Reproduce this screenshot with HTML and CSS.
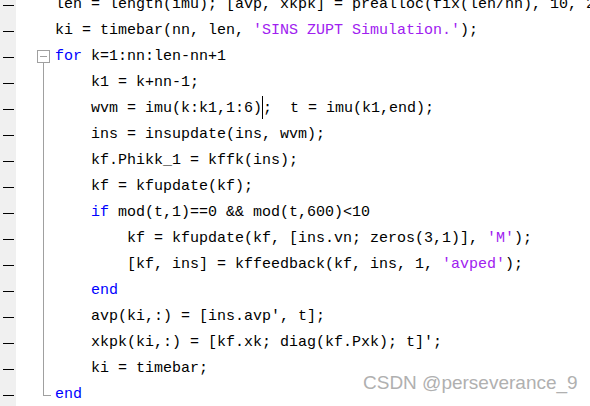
FILE: index.html
```html
<!DOCTYPE html>
<html>
<head>
<meta charset="utf-8">
<link rel="stylesheet" href="styles.css">
</head>
<body>
<div class="editor">
  <div class="row"><div class="mark"><i></i></div><div class="fold"></div><div class="code">len = length(imu); [avp, xkpk] = prealloc(fix(len/nn), 10, 2*kf.n+1);</div></div>
  <div class="row"><div class="mark"><i></i></div><div class="fold"></div><div class="code">ki = timebar(nn, len, <span class="str">'SINS ZUPT Simulation.'</span>);</div></div>
  <div class="row"><div class="mark"><i></i></div><div class="fold start"><b class="box"></b></div><div class="code"><span class="kw">for</span> k=1:nn:len-nn+1</div></div>
  <div class="row"><div class="mark"><i></i></div><div class="fold mid"></div><div class="code">    k1 = k+nn-1;</div></div>
  <div class="row"><div class="mark"><i></i></div><div class="fold mid"></div><div class="code">    wvm = imu(k:k1,1:6)<span class="caret"></span>;  t = imu(k1,end);</div></div>
  <div class="row"><div class="mark"><i></i></div><div class="fold mid"></div><div class="code">    ins = insupdate(ins, wvm);</div></div>
  <div class="row"><div class="mark"><i></i></div><div class="fold mid"></div><div class="code">    kf.Phikk_1 = kffk(ins);</div></div>
  <div class="row"><div class="mark"><i></i></div><div class="fold mid"></div><div class="code">    kf = kfupdate(kf);</div></div>
  <div class="row"><div class="mark"><i></i></div><div class="fold mid"></div><div class="code">    <span class="kw">if</span> mod(t,1)==0 &amp;&amp; mod(t,600)&lt;10</div></div>
  <div class="row"><div class="mark"><i></i></div><div class="fold mid"></div><div class="code">        kf = kfupdate(kf, [ins.vn; zeros(3,1)], <span class="str">'M'</span>);</div></div>
  <div class="row"><div class="mark"><i></i></div><div class="fold mid"></div><div class="code">        [kf, ins] = kffeedback(kf, ins, 1, <span class="str">'avped'</span>);</div></div>
  <div class="row"><div class="mark"><i></i></div><div class="fold mid"></div><div class="code">    <span class="kw">end</span></div></div>
  <div class="row"><div class="mark"><i></i></div><div class="fold mid"></div><div class="code">    avp(ki,:) = [ins.avp', t];</div></div>
  <div class="row"><div class="mark"><i></i></div><div class="fold mid"></div><div class="code">    xkpk(ki,:) = [kf.xk; diag(kf.Pxk); t]';</div></div>
  <div class="row"><div class="mark"><i></i></div><div class="fold mid"></div><div class="code">    ki = timebar;</div></div>
  <div class="row"><div class="mark"><i></i></div><div class="fold last"></div><div class="code"><span class="kw">end</span></div></div>
</div>
<div class="watermark">CSDN @perseverance_9</div>
</body>
</html>
```

FILE: styles.css
```css
html, body {
  margin: 0;
  padding: 0;
  background: #ffffff;
  overflow: hidden;
  width: 590px;
  height: 406px;
}

.editor {
  margin-top: -8px;
  display: flex;
  flex-direction: column;
}

.row {
  display: grid;
  grid-template-columns: 16px 38px 1fr;
  height: 26px;
}

.mark {
  background: #f0f0f0;
  display: flex;
  align-items: center;
}

.mark i {
  display: block;
  margin-left: 3px;
  width: 11px;
  height: 1px;
  background: #000;
  margin-top: 0px;
}

.fold {
  position: relative;
}

.fold.start .box {
  position: absolute;
  left: 21px;
  top: 6px;
  width: 11px;
  height: 11px;
  border: 1px solid #a0a0a0;
  background: #fff;
}

.fold.start .box::after {
  content: "";
  position: absolute;
  left: 2px;
  top: 5px;
  width: 7px;
  height: 1px;
  background: #a0a0a0;
}

.fold.start::after {
  content: "";
  position: absolute;
  left: 27px;
  top: 19px;
  bottom: 0;
  width: 1px;
  background: #a0a0a0;
}

.fold.mid::after {
  content: "";
  position: absolute;
  left: 27px;
  top: 0;
  bottom: 0;
  width: 1px;
  background: #a0a0a0;
}

.fold.last::after {
  content: "";
  position: absolute;
  left: 27px;
  top: 0;
  height: 13px;
  width: 7px;
  border-left: 1px solid #a0a0a0;
  border-bottom: 1px solid #a0a0a0;
}

.code {
  font-family: "Liberation Mono", "DejaVu Sans Mono", monospace;
  font-size: 15px;
  line-height: 26px;
  white-space: pre;
  color: #000;
  overflow: hidden;
  padding-left: 1px;
}

.kw {
  color: #0000ff;
}

.str {
  color: #a020f0;
}

.caret {
  display: inline-block;
  width: 0;
  height: 24px;
  border-left: 1px solid #000;
  vertical-align: middle;
  margin-top: -2px;
}

.watermark {
  position: absolute;
  left: 363px;
  top: 372px;
  font-family: "Liberation Sans", Arial, sans-serif;
  font-size: 19px;
  color: #b0b0b0;
  white-space: nowrap;
}
```
